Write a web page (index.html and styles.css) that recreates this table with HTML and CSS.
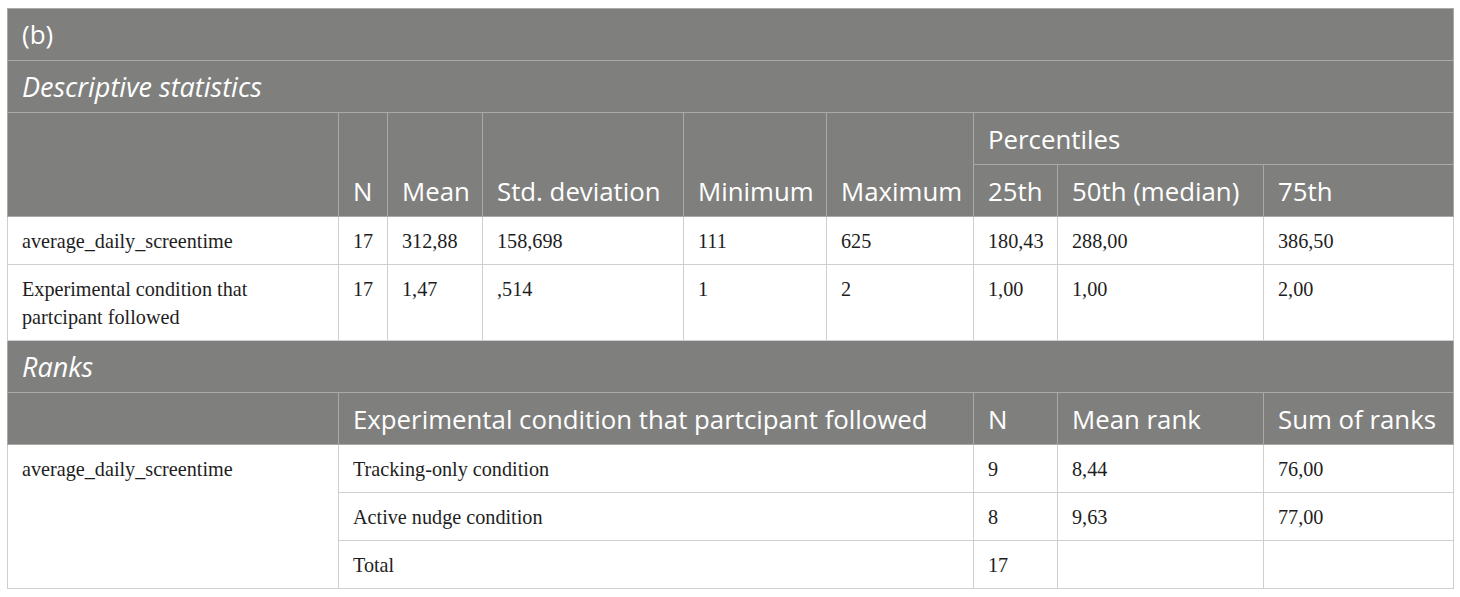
FILE: index.html
```html
<!DOCTYPE html>
<html>
<head>
<meta charset="utf-8">
<link rel="stylesheet" href="styles.css">
</head>
<body>
<table class="stats">
  <colgroup>
    <col class="c1"><col class="c2"><col class="c3"><col class="c4"><col class="c5"><col class="c6"><col class="c7"><col class="c8"><col class="c9">
  </colgroup>
  <thead>
    <tr><th class="title" colspan="9">(b)</th></tr>
    <tr><th class="title italic" colspan="9">Descriptive statistics</th></tr>
    <tr>
      <th rowspan="2"></th>
      <th rowspan="2" class="bottom">N</th>
      <th rowspan="2" class="bottom">Mean</th>
      <th rowspan="2" class="bottom">Std. deviation</th>
      <th rowspan="2" class="bottom">Minimum</th>
      <th rowspan="2" class="bottom">Maximum</th>
      <th colspan="3">Percentiles</th>
    </tr>
    <tr>
      <th>25th</th>
      <th>50th (median)</th>
      <th>75th</th>
    </tr>
  </thead>
  <tbody>
    <tr>
      <td>average_daily_screentime</td>
      <td>17</td><td>312,88</td><td>158,698</td><td>111</td><td>625</td><td>180,43</td><td>288,00</td><td>386,50</td>
    </tr>
    <tr>
      <td>Experimental condition that partcipant followed</td>
      <td>17</td><td>1,47</td><td>,514</td><td>1</td><td>2</td><td>1,00</td><td>1,00</td><td>2,00</td>
    </tr>
  </tbody>
  <tbody>
    <tr><th class="title italic" colspan="9">Ranks</th></tr>
    <tr>
      <th></th>
      <th colspan="5">Experimental condition that partcipant followed</th>
      <th>N</th>
      <th>Mean rank</th>
      <th>Sum of ranks</th>
    </tr>
    <tr>
      <td rowspan="3">average_daily_screentime</td>
      <td colspan="5">Tracking-only condition</td>
      <td>9</td><td>8,44</td><td>76,00</td>
    </tr>
    <tr>
      <td colspan="5">Active nudge condition</td>
      <td>8</td><td>9,63</td><td>77,00</td>
    </tr>
    <tr>
      <td colspan="5">Total</td>
      <td>17</td><td></td><td></td>
    </tr>
  </tbody>
</table>
</body>
</html>
```

FILE: styles.css
```css
html, body {
  background: #ffffff;
}
body {
  margin: 8px 0 0 7px;
}
.stats {
  border-collapse: collapse;
  table-layout: fixed;
  width: 1446px;
  border: 1px solid #c8c8c8;
}
.c1 { width: 331px; }
.c2 { width: 49px; }
.c3 { width: 95px; }
.c4 { width: 201px; }
.c5 { width: 143px; }
.c6 { width: 147px; }
.c7 { width: 84px; }
.c8 { width: 206px; }
.c9 { width: 190px; }

.stats th {
  background: #7f807e;
  color: #ffffff;
  font-family: "Open Sans", "Noto Sans", sans-serif;
  font-weight: normal;
  font-size: 25.8px;
  line-height: 32px;
  text-align: left;
  padding: 10px 14px 9px 14px;
  border: 1px solid #a9aaa8;
  white-space: nowrap;
}
.stats th.title {
  font-size: 26px;
  padding-top: 9px;
  padding-bottom: 10px;
}
.stats th.italic {
  font-style: italic;
  font-size: 27px;
  padding-top: 10px;
  padding-bottom: 9px;
}
.stats th.bottom {
  vertical-align: bottom;
}
.stats td {
  font-family: "Liberation Serif", "Times New Roman", serif;
  font-size: 20.2px;
  line-height: 28px;
  color: #1e1e1e;
  padding: 10px 14px 9px 14px;
  vertical-align: top;
  border: 1px solid #cfcfcf;
}
```
